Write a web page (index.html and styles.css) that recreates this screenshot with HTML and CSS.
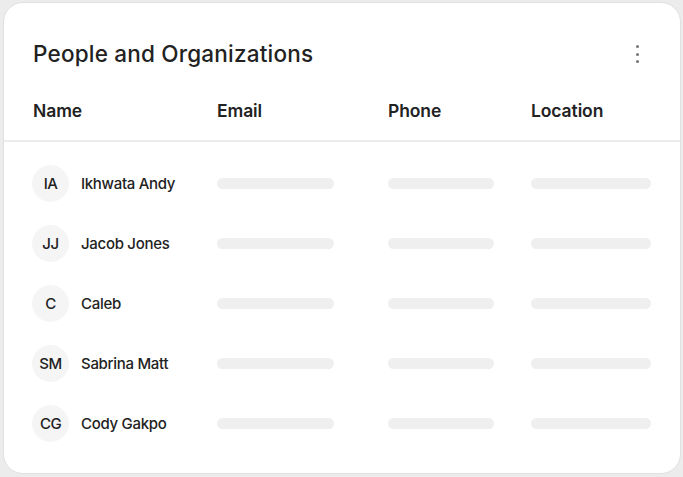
FILE: index.html
```html
<!DOCTYPE html>
<html lang="en">
<head>
<meta charset="utf-8">
<title>People and Organizations</title>
<link rel="stylesheet" href="styles.css">
</head>
<body>
<div class="card">
  <div class="card-head">
    <div class="title-row">
      <h1 class="title">People and Organizations</h1>
      <button class="kebab" aria-label="More"><span></span><span></span><span></span></button>
    </div>
    <div class="grid head-row">
      <div>Name</div>
      <div>Email</div>
      <div>Phone</div>
      <div>Location</div>
    </div>
  </div>
  <div class="rows">
    <div class="grid row">
      <div class="person"><span class="avatar">IA</span><span class="name">Ikhwata Andy</span></div>
      <div><span class="bar bar-email"></span></div>
      <div><span class="bar bar-phone"></span></div>
      <div><span class="bar bar-loc"></span></div>
    </div>
    <div class="grid row">
      <div class="person"><span class="avatar">JJ</span><span class="name">Jacob Jones</span></div>
      <div><span class="bar bar-email"></span></div>
      <div><span class="bar bar-phone"></span></div>
      <div><span class="bar bar-loc"></span></div>
    </div>
    <div class="grid row">
      <div class="person"><span class="avatar">C</span><span class="name">Caleb</span></div>
      <div><span class="bar bar-email"></span></div>
      <div><span class="bar bar-phone"></span></div>
      <div><span class="bar bar-loc"></span></div>
    </div>
    <div class="grid row">
      <div class="person"><span class="avatar">SM</span><span class="name">Sabrina Matt</span></div>
      <div><span class="bar bar-email"></span></div>
      <div><span class="bar bar-phone"></span></div>
      <div><span class="bar bar-loc"></span></div>
    </div>
    <div class="grid row">
      <div class="person"><span class="avatar">CG</span><span class="name">Cody Gakpo</span></div>
      <div><span class="bar bar-email"></span></div>
      <div><span class="bar bar-phone"></span></div>
      <div><span class="bar bar-loc"></span></div>
    </div>
  </div>
</div>
</body>
</html>
```
FILE: styles.css
```css
* { box-sizing: border-box; }
html, body { margin: 0; padding: 0; }
body {
  background: #ececec;
  font-family: Inter, "Noto Sans", "Liberation Sans", sans-serif;
  color: #222;
  width: 683px;
  height: 477px;
  overflow: hidden;
  padding: 2px 2px 0 3px;
}
.card {
  width: 678px;
  height: 472px;
  background: #fff;
  border: 1px solid #e0e0e0;
  border-radius: 20px;
  overflow: hidden;
}
.card-head {
  padding: 37px 0 19px 29px;
  border-bottom: 2px solid #ececec;
}
.title-row {
  display: flex;
  align-items: center;
  justify-content: space-between;
  padding-right: 39px;
  height: 28px;
}
.title {
  margin: 0;
  font-size: 22.5px;
  line-height: 28px;
  font-weight: 500;
  letter-spacing: 0.2px;
  color: #222;
}
.kebab {
  border: 0;
  background: transparent;
  padding: 0;
  width: 8px;
  height: 22px;
  display: flex;
  flex-direction: column;
  align-items: center;
  justify-content: center;
  gap: 4.5px;
  cursor: pointer;
}
.kebab span {
  width: 3px;
  height: 3px;
  border-radius: 50%;
  background: #777;
}
.grid {
  display: grid;
  grid-template-columns: 184px 171px 143px 1fr;
  align-items: center;
}
.head-row {
  margin-top: 33px;
  height: 20px;
  font-size: 17.5px;
  line-height: 20px;
  font-weight: 600;
  letter-spacing: -0.1px;
  color: #222;
}
.rows {
  padding: 11px 0 0 28px;
}
.row {
  height: 60px;
}
.person {
  display: flex;
  align-items: center;
  gap: 12px;
}
.avatar {
  width: 37px;
  height: 37px;
  border-radius: 50%;
  background: #f5f5f6;
  display: flex;
  align-items: center;
  justify-content: center;
  font-size: 15px;
  font-weight: 500;
  letter-spacing: -0.5px;
  color: #222;
}
.name {
  font-size: 15px;
  font-weight: 500;
  letter-spacing: -0.3px;
  color: #222;
}
.bar {
  display: block;
  height: 11px;
  border-radius: 6px;
  background: #efefef;
  margin-left: 1px;
}
.bar-email { width: 117px; }
.bar-phone { width: 106px; }
.bar-loc { width: 120px; }
```
